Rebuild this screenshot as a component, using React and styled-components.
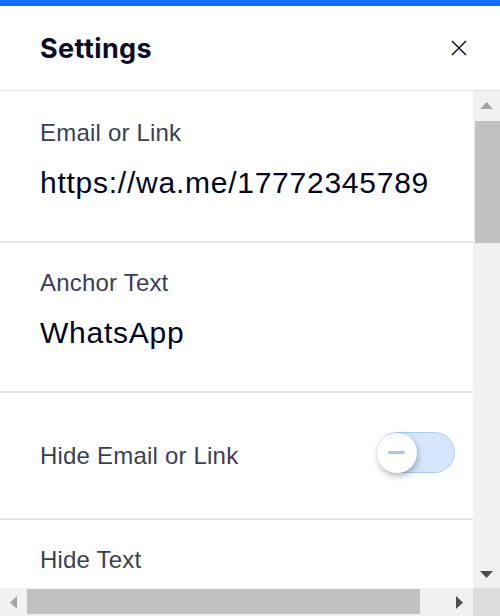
import React from 'react';
import styled, { createGlobalStyle } from 'styled-components';

const GlobalStyle = createGlobalStyle`
  html, body {
    margin: 0;
    padding: 0;
    height: 616px;
    overflow: hidden;
    background: #fff;
  }
  body {
    font-family: "Liberation Sans", Arial, sans-serif;
  }
`;

const Panel = styled.div`
  width: 500px;
  height: 616px;
  display: flex;
  flex-direction: column;
  border-top: 6px solid #116dff;
  box-sizing: border-box;
`;

const Header = styled.header`
  flex: none;
  height: 84px;
  display: flex;
  align-items: center;
  justify-content: space-between;
  padding: 0 29px 0 40px;
  border-bottom: 1px solid #dfe1e8;
`;

const Title = styled.h1`
  margin: 0;
  font-family: Inter, "Noto Sans", sans-serif;
  font-weight: 700;
  font-size: 27px;
  color: #0c0d2b;
  letter-spacing: 0.4px;
`;

const CloseButton = styled.button`
  width: 24px;
  height: 24px;
  padding: 0;
  border: 0;
  background: none;
  display: flex;
  align-items: center;
  justify-content: center;
  color: #131330;
`;

/* body area: viewport + classic scrollbars drawn beside it */
const Body = styled.div`
  flex: 1;
  min-height: 0;
  display: grid;
  grid-template-columns: 1fr 27px;
  grid-template-rows: 1fr 28px;
`;

const Viewport = styled.div`
  overflow: hidden;
  padding-top: 2px;
`;

const VBar = styled.div`
  background: #f1f1f1;
  display: flex;
  flex-direction: column;
`;

const HBar = styled.div`
  background: #f1f1f1;
  display: flex;
`;

const Corner = styled.div`
  background: #dcdcdc;
`;

const ArrowButton = styled.div`
  flex: none;
  width: 27px;
  height: 28px;
  display: flex;
  align-items: center;
  justify-content: center;
  color: ${(p) => (p.$disabled ? '#a3a3a3' : '#505050')};
`;

const VTrack = styled.div`
  flex: 1;
  padding: 2px 0 0 2px;
`;

const VThumb = styled.div`
  height: 122px;
  background: #c1c1c1;
`;

const HTrack = styled.div`
  flex: 1;
  padding: 1px 0 2px 0;
`;

const HThumb = styled.div`
  width: 393px;
  height: 100%;
  background: #c1c1c1;
`;

const Section = styled.section`
  padding: 25px 40px 40px;
  border-bottom: 2px solid #e4e5eb;
`;

const ToggleRow = styled.section`
  display: flex;
  align-items: center;
  justify-content: space-between;
  padding: 39px 18px 45px 40px;
  border-bottom: 2px solid #e4e5eb;
`;

const Label = styled.div`
  font-size: 24px;
  line-height: 30px;
  letter-spacing: 0.2px;
  color: #3b3e58;
  white-space: nowrap;
`;

const RowLabel = styled(Label)`
  margin-top: 6px;
`;

const Value = styled.div`
  margin-top: 17px;
  font-size: 30px;
  line-height: 36px;
  letter-spacing: 0.75px;
  color: #000624;
  white-space: nowrap;
`;

const Track = styled.div`
  width: 78px;
  height: 41px;
  box-sizing: border-box;
  border-radius: 21px;
  border: 1.5px solid #a8caff;
  background: #d6e6fe;
  display: flex;
  align-items: center;
`;

const Knob = styled.div`
  width: 40px;
  height: 40px;
  margin: 0 -1.5px;
  border-radius: 50%;
  background: #fff;
  box-shadow: 1px 3px 6px rgba(22, 45, 61, 0.35);
  display: flex;
  align-items: center;
  justify-content: center;

  &::before {
    content: "";
    width: 17px;
    height: 3px;
    border-radius: 2px;
    background: #a6c6fb;
  }
`;

const Arrow = ({ dir }) => {
  const pts = {
    up: '0,7 6.5,0 13,7',
    down: '0,0 13,0 6.5,7',
    left: '7,0 7,13 0,6.5',
    right: '0,0 7,6.5 0,13',
  }[dir];
  const flat = dir === 'up' || dir === 'down';
  return (
    <svg width={flat ? 13 : 7} height={flat ? 7 : 13} viewBox={flat ? '0 0 13 7' : '0 0 7 13'}>
      <polygon points={pts} fill="currentColor" />
    </svg>
  );
};

const Field = ({ label, value }) => (
  <Section>
    <Label>{label}</Label>
    <Value>{value}</Value>
  </Section>
);

export default function App() {
  return (
    <>
      <GlobalStyle />
      <Panel>
        <Header>
          <Title>Settings</Title>
          <CloseButton aria-label="Close">
            <svg width="16" height="16" viewBox="0 0 16 16" fill="none" stroke="currentColor" strokeWidth="1.5">
              <path d="M1 1l14 14M15 1L1 15" />
            </svg>
          </CloseButton>
        </Header>
        <Body>
          <Viewport>
            <Field label="Email or Link" value="https://wa.me/17772345789" />
            <Field label="Anchor Text" value="WhatsApp" />
            <ToggleRow>
              <RowLabel>Hide Email or Link</RowLabel>
              <Track>
                <Knob />
              </Track>
            </ToggleRow>
            <Section>
              <Label>Hide Text</Label>
            </Section>
          </Viewport>
          <VBar>
            <ArrowButton $disabled>
              <Arrow dir="up" />
            </ArrowButton>
            <VTrack>
              <VThumb />
            </VTrack>
            <ArrowButton>
              <Arrow dir="down" />
            </ArrowButton>
          </VBar>
          <HBar>
            <ArrowButton $disabled>
              <Arrow dir="left" />
            </ArrowButton>
            <HTrack>
              <HThumb />
            </HTrack>
            <ArrowButton>
              <Arrow dir="right" />
            </ArrowButton>
          </HBar>
          <Corner />
        </Body>
      </Panel>
    </>
  );
}
